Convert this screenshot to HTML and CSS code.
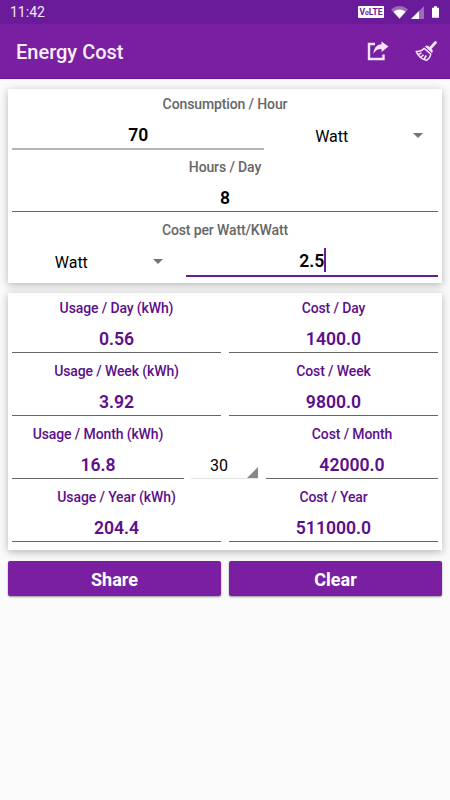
FILE: index.html
```html
<!DOCTYPE html>
<html lang="en">
<head>
    <meta charset="UTF-8">
    <meta name="viewport" content="width=device-width, initial-scale=1.0">
    <title>Energy Cost</title>
    <link rel="stylesheet" href="styles.css">
</head>
<body>
    <div class="status-bar">
        <span class="clock">11:42</span>
        <div class="status-icons">
            <span class="volte">V<i>o</i>LTE</span>
            <svg class="wifi" width="17" height="13" viewBox="0 0 17 13">
                <path d="M0 3.4Q8.5-3.4 17 3.4L8.5 13z" fill="#fff" opacity=".35"/>
                <path d="M2.400 5.700Q8.500 1.200 14.600 5.700L8.500 12.500z" fill="#fff"/>
            </svg>
            <svg class="signal" width="13" height="13" viewBox="0 0 13 13">
                <path d="M0 13L13 0v13z" fill="#fff" opacity=".35"/>
                <path d="M0 13L8 5v8z" fill="#fff"/>
            </svg>
            <svg class="battery" width="7" height="12" viewBox="0 0 8 13">
                <path d="M2.300 0h3.400v1.500H8V13H0V1.500h2.300z" fill="#fff"/>
            </svg>
        </div>
    </div>

    <header class="app-bar">
        <h1>Energy Cost</h1>
        <div class="actions">
            <svg width="22" height="20" viewBox="0 0 22 20">
                <path d="M8 3H2v15h14.500v-4.500" fill="none" stroke="#f3e5f5" stroke-width="2.400"/>
                <path d="M14.500 0.500L21.500 5.500l-7 5.500V8c-3.500 0-5.800 1-8 4.700C6.700 7.200 9.600 3.500 14.500 3.200z" fill="#f3e5f5"/>
            </svg>
            <svg class="broom" width="22" height="21" viewBox="0 0 22 21">
                <path d="M20.500 1.500L15 7.500" fill="none" stroke="#f3e5f5" stroke-width="2.600" stroke-linecap="round"/>
                <path d="M10.500 5.500c1.500-.8 2.600-.4 4 .8l1.200 1c1.400 1.300 2 2.500 1.300 4.200z" fill="#f3e5f5" stroke="#f3e5f5" stroke-linejoin="round"/>
                <path d="M9.200 7.300C7.500 9.500 4.500 10.500 1.200 10.500 3 14.800 6.500 18 11.500 19.300c2.800-1.800 4-4 4.200-6.300z" fill="none" stroke="#f3e5f5" stroke-width="1.600" stroke-linejoin="round"/>
                <path d="M3.500 13.300l3-1.300M6 16l2.500-2.200M9.200 18l2-3.500" fill="none" stroke="#f3e5f5" stroke-width="1.600"/>
            </svg>
        </div>
    </header>

    <main>
        <section class="card inputs">
            <div class="label">Consumption / Hour</div>
            <div class="row">
                <div class="field wide soft">70</div>
                <div class="spinner"><span>Watt</span><i class="arrow"></i></div>
            </div>
            <div class="label">Hours / Day</div>
            <div class="row">
                <div class="field wide">8</div>
            </div>
            <div class="label">Cost per Watt/KWatt</div>
            <div class="row">
                <div class="spinner"><span>Watt</span><i class="arrow"></i></div>
                <div class="field wide focused">2.5<i class="cursor"></i></div>
            </div>
        </section>

        <section class="card results">
            <div class="row">
                <div class="cell"><div class="label">Usage / Day (kWh)</div><div class="field">0.56</div></div>
                <div class="cell"><div class="label">Cost / Day</div><div class="field">1400.0</div></div>
            </div>
            <div class="row">
                <div class="cell"><div class="label">Usage / Week (kWh)</div><div class="field">3.92</div></div>
                <div class="cell"><div class="label">Cost / Week</div><div class="field">9800.0</div></div>
            </div>
            <div class="row">
                <div class="cell"><div class="label">Usage / Month (kWh)</div><div class="field">16.8</div></div>
                <div class="days"><span>30</span><i class="corner"></i></div>
                <div class="cell"><div class="label">Cost / Month</div><div class="field">42000.0</div></div>
            </div>
            <div class="row">
                <div class="cell"><div class="label">Usage / Year (kWh)</div><div class="field">204.4</div></div>
                <div class="cell"><div class="label">Cost / Year</div><div class="field">511000.0</div></div>
            </div>
        </section>

        <div class="buttons">
            <button type="button">Share</button>
            <button type="button">Clear</button>
        </div>
    </main>
</body>
</html>
```

FILE: styles.css
```css
* {
    box-sizing: border-box;
}

body {
    margin: 0;
    min-height: 800px;
    background-color: #fafafa;
    font-family: Roboto, sans-serif;
    color: #000;
}

.status-bar {
    display: flex;
    align-items: center;
    justify-content: space-between;
    height: 24px;
    padding: 0 11px 0 10px;
    background-color: #6a1b9a;
    color: #f3e5f5;
    font-size: 14px;
}

.status-icons {
    display: flex;
    align-items: center;
}

.volte {
    width: 26px;
    height: 12px;
    border-radius: 1px;
    background-color: #fff;
    color: #6a1b9a;
    font-size: 8.5px;
    font-weight: 700;
    line-height: 13px;
    text-align: center;
}

.volte i {
    font-size: 7px;
}

.wifi {
    margin-left: 7px;
}

.signal {
    margin-left: 3px;
}

.battery {
    margin-left: 8px;
}

.app-bar {
    display: flex;
    align-items: center;
    justify-content: space-between;
    height: 55px;
    padding: 0 13px 0 16px;
    background-color: #7b1fa2;
    border-bottom: 1px solid #6a1593;
    color: #f8effb;
}

h1 {
    margin: 2px 0 0;
    font-size: 20px;
    font-weight: 500;
}

.actions {
    display: flex;
    align-items: center;
    gap: 26px;
}

main {
    padding: 10px 8px;
}

.card {
    margin-bottom: 10px;
    padding-bottom: 5px;
    background-color: #fff;
    box-shadow: 0 2px 8px rgba(0, 0, 0, 0.28);
}

.row {
    display: flex;
}

.label {
    height: 30px;
    line-height: 30px;
    text-align: center;
    font-size: 14px;
    font-weight: 500;
    letter-spacing: -0.12px;
    color: #666;
}

.field {
    height: 30px;
    margin: 0 4px 3px;
    border-bottom: 1px solid #666;
    line-height: 32px;
    text-align: center;
    font-size: 17.6px;
    font-weight: 600;
}

.wide {
    flex: 1;
}

.soft {
    height: 31px;
    margin-bottom: 2px;
    border-bottom: 2px solid #b5b5b5;
}

.focused {
    display: flex;
    justify-content: center;
    height: 32px;
    margin-bottom: 1px;
    border-bottom: 2px solid #6a1b9a;
}

.cursor {
    width: 2px;
    height: 24px;
    margin: 3px -2px 0 0;
    background-color: #6a1b9a;
}

.spinner {
    display: flex;
    align-items: center;
    width: 173.6px;
    height: 33px;
    padding-right: 19px;
    font-size: 16px;
}

.spinner span {
    flex: 1;
    padding: 1px 18px 0 0;
    text-align: center;
}

.arrow {
    border: 5px solid transparent;
    border-top-color: #757575;
    border-bottom-width: 0;
}

.cell {
    flex: 1;
}

.results .label,
.results .field {
    color: #5c0f8b;
}

.days {
    display: flex;
    align-items: center;
    justify-content: flex-end;
    width: 67px;
    height: 30px;
    margin: 30px 4px 0 3px;
    border-bottom: 1px solid #e4e4e4;
    font-size: 16px;
}

.days span {
    flex: 1;
    padding-top: 4px;
    text-align: center;
}

.corner {
    align-self: flex-end;
    border-left: 11px solid transparent;
    border-bottom: 11px solid #888;
}

.buttons {
    display: flex;
    gap: 8px;
    padding-top: 1px;
}

button {
    flex: 1;
    height: 35px;
    padding: 1px 0 0;
    border: 0;
    border-radius: 2px;
    background-color: #7b1fa2;
    box-shadow: 0 1px 2px rgba(0, 0, 0, 0.4);
    color: #fff;
    font-family: inherit;
    font-size: 18px;
    font-weight: 700;
}
```
